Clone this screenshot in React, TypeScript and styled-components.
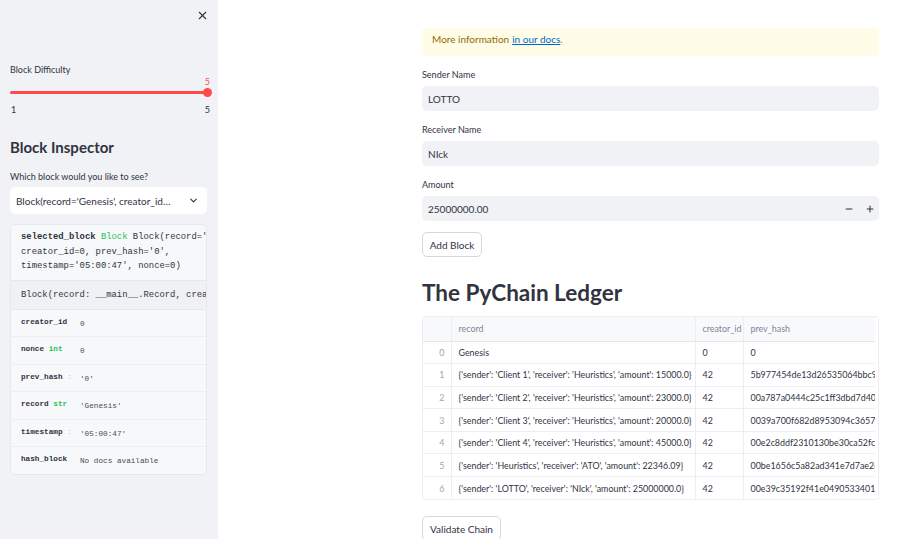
import React from "react";
import styled, { createGlobalStyle } from "styled-components";
import { X, ChevronDown, Minus, Plus } from "lucide-react";

const GlobalStyle = createGlobalStyle`
  html, body {
    margin: 0;
    padding: 0;
    height: 100%;
    overflow: hidden;
  }
  body {
    font-family: Lato, "Noto Sans", sans-serif;
    color: #31333f;
    background: #ffffff;
  }
`;

const mono = `"Liberation Mono", "DejaVu Sans Mono", monospace`;

const Page = styled.div`
  display: flex;
  width: 903px;
  height: 539px;
  overflow: hidden;
`;

const Sidebar = styled.aside`
  width: 218px;
  flex-shrink: 0;
  background: #f0f2f6;
  padding: 0 11px 0 10px;
  box-sizing: border-box;
  display: flex;
  flex-direction: column;
`;

const CloseRow = styled.div`
  display: flex;
  justify-content: flex-end;
  padding-top: 9px;
  margin-right: -2px;
  height: 64px;
  box-sizing: border-box;
  color: #31333f;
`;

const Label = styled.div`
  font-size: 9px;
  line-height: 12px;
  color: #31333f;
`;

const SliderWrap = styled.div`
  position: relative;
  height: 40px;
`;

const Track = styled.div`
  position: absolute;
  left: 0;
  right: 0;
  top: 15px;
  height: 3px;
  border-radius: 2px;
  background: #ff4b4b;
`;

const Thumb = styled.div`
  position: absolute;
  right: -5px;
  top: 12px;
  width: 9px;
  height: 9px;
  border-radius: 50%;
  background: #ff4b4b;
`;

const ThumbValue = styled.div`
  position: absolute;
  right: -3px;
  top: 0;
  font-size: 9px;
  color: #ff4b4b;
`;

const TickRow = styled.div`
  position: absolute;
  left: 0;
  right: -3px;
  top: 28px;
  display: flex;
  justify-content: space-between;
  font-size: 9px;
  padding-left: 1px;
`;

const SideHeading = styled.h2`
  margin: 21px 0 14px;
  font-size: 15px;
  font-weight: 700;
  line-height: 20px;
  color: #31333f;
`;

const Select = styled.div`
  margin-top: 4px;
  height: 27px;
  background: #ffffff;
  border-radius: 5px;
  display: flex;
  align-items: center;
  justify-content: space-between;
  padding: 0 8px 0 6px;
  font-size: 10px;
  color: #31333f;
`;

const DocBox = styled.div`
  margin-top: 10px;
  height: 249px;
  border: 1px solid #e6e8ee;
  border-radius: 5px;
  background: #f7f8fa;
  overflow: hidden;
  display: flex;
  flex-direction: column;
`;

const CodeHead = styled.div`
  padding: 5px 10px 6px;
  font-family: ${mono};
  font-size: 8.9px;
  line-height: 14.5px;
  white-space: pre;
  border-bottom: 1px solid #e6e8ee;
  background: #f7f8fa;
`;

const Bold = styled.span`
  font-weight: 700;
`;

const TypeTag = styled.span<{ $faint?: boolean }>`
  color: #21c354;
  opacity: ${(p) => (p.$faint ? 0.4 : 1)};
`;

const Signature = styled.div`
  padding: 0 10px;
  height: 29px;
  display: flex;
  align-items: center;
  font-family: ${mono};
  font-size: 8.9px;
  white-space: pre;
  background: #eff1f5;
  border-bottom: 1px solid #e6e8ee;
`;

const Field = styled.div`
  display: flex;
  align-items: center;
  height: 27px;
  padding: 0 10px;
  border-bottom: 1px solid #eceef2;
  font-family: ${mono};
  font-size: 7.7px;
  &:last-child {
    border-bottom: none;
  }
`;

const FieldName = styled.div`
  width: 59px;
  flex-shrink: 0;
  font-weight: 700;
  white-space: pre;
  margin-top: -3px;
`;

const FieldValue = styled.div`
  color: #4a4c57;
  margin-top: 1px;
`;

const Main = styled.main`
  flex: 1;
  padding: 28px 0 0 204px;
  box-sizing: border-box;
  overflow: hidden;
`;

const Column = styled.div`
  width: 457px;
  display: flex;
  flex-direction: column;
`;

const Info = styled.div`
  height: 28px;
  box-sizing: border-box;
  background: #fffce7;
  border-radius: 4px;
  color: #926c05;
  font-size: 10px;
  line-height: 12px;
  display: flex;
  align-items: flex-start;
  padding: 5px 0 0 10px;
`;

const DocLink = styled.a`
  color: #0068c9;
  text-decoration: underline;
  margin-left: 3px;
`;

const FieldLabel = styled.div`
  font-size: 9px;
  line-height: 12px;
  margin-top: 13px;
  margin-bottom: 5px;
`;

const Input = styled.div`
  height: 25px;
  background: #f0f2f6;
  border-radius: 5px;
  display: flex;
  align-items: center;
  padding: 0 6px;
  font-size: 10px;
`;

const Stepper = styled.div`
  margin-left: auto;
  display: flex;
  gap: 11px;
  margin-right: -2px;
  color: #31333f;
`;

const ButtonRow = styled.div<{ $top: number }>`
  margin-top: ${(p) => p.$top}px;
`;

const Button = styled.button<{ $width: number }>`
  width: ${(p) => p.$width}px;
  height: 25px;
  background: #ffffff;
  border: 1px solid #d6d8de;
  border-radius: 5px;
  font-family: Lato, "Noto Sans", sans-serif;
  font-size: 10px;
  color: #31333f;
  padding: 0;
  cursor: pointer;
`;

const Ledger = styled.h1`
  margin: 22px 0 9px;
  font-size: 22.5px;
  line-height: 28px;
  font-weight: 700;
  color: #31333f;
`;

const TableBox = styled.div`
  width: 457px;
  height: 184px;
  border: 1px solid #eceef2;
  border-radius: 4px;
  overflow: hidden;
  box-sizing: border-box;
`;

const Table = styled.table`
  border-collapse: collapse;
  font-size: 8.9px;
  table-layout: fixed;
  width: 452px;
`;

const Th = styled.th<{ $w: number }>`
  box-sizing: border-box;
  width: ${(p) => p.$w}px;
  height: 24px;
  background: #f8f9fb;
  font-weight: 400;
  color: #808495;
  text-align: left;
  padding: 0 7px;
  border-right: 1px solid #eceef2;
  border-bottom: 1px solid #e4e6ea;
  white-space: nowrap;
  overflow: hidden;
  &:last-child {
    border-right: none;
  }
`;

const Td = styled.td<{ $index?: boolean }>`
  box-sizing: border-box;
  height: 22.6px;
  padding: 0 ${(p) => (p.$index ? "6px" : "7px")};
  text-align: ${(p) => (p.$index ? "right" : "left")};
  color: ${(p) => (p.$index ? "#a3a5ae" : "#31333f")};
  border-right: 1px solid #eceef2;
  border-bottom: 1px solid #eceef2;
  white-space: nowrap;
  overflow: hidden;
  &:last-child {
    border-right: none;
    text-overflow: clip;
  }
`;

const Tr = styled.tr`
  &:last-child td {
    border-bottom: none;
  }
`;

const rows = [
  ["Genesis", "0", "0"],
  [
    "{'sender': 'Client 1', 'receiver': 'Heuristics', 'amount': 15000.0}",
    "42",
    "5b977454de13d26535064bbc9f6e2",
  ],
  [
    "{'sender': 'Client 2', 'receiver': 'Heuristics', 'amount': 23000.0}",
    "42",
    "00a787a0444c25c1ff3dbd7d40918",
  ],
  [
    "{'sender': 'Client 3', 'receiver': 'Heuristics', 'amount': 20000.0}",
    "42",
    "0039a700f682d8953094c365777a1",
  ],
  [
    "{'sender': 'Client 4', 'receiver': 'Heuristics', 'amount': 45000.0}",
    "42",
    "00e2c8ddf2310130be30ca52fcb823",
  ],
  [
    "{'sender': 'Heuristics', 'receiver': 'ATO', 'amount': 22346.09}",
    "42",
    "00be1656c5a82ad341e7d7ae26637",
  ],
  [
    "{'sender': 'LOTTO', 'receiver': 'NIck', 'amount': 25000000.0}",
    "42",
    "00e39c35192f41e04905334013c5e",
  ],
];

const fields: [string, React.ReactNode, string][] = [
  ["creator_id", null, "0"],
  ["nonce ", <TypeTag key="t">int</TypeTag>, "0"],
  ["prev_hash ", <TypeTag key="t" $faint>:</TypeTag>, "'0'"],
  ["record ", <TypeTag key="t">str</TypeTag>, "'Genesis'"],
  ["timestamp ", <TypeTag key="t" $faint>:</TypeTag>, "'05:00:47'"],
  ["hash_block", null, "No docs available"],
];

export default function App() {
  return (
    <Page>
      <GlobalStyle />
      <Sidebar>
        <CloseRow>
          <X size={13} strokeWidth={2} />
        </CloseRow>
        <Label>Block Difficulty</Label>
        <SliderWrap>
          <ThumbValue>5</ThumbValue>
          <Track />
          <Thumb />
          <TickRow>
            <span>1</span>
            <span>5</span>
          </TickRow>
        </SliderWrap>
        <SideHeading>Block Inspector</SideHeading>
        <Label>Which block would you like to see?</Label>
        <Select>
          <span>Block(record='Genesis', creator_id…</span>
          <ChevronDown size={11} strokeWidth={2.5} />
        </Select>
        <DocBox>
          <CodeHead>
            <Bold>selected_block</Bold> <TypeTag>Block</TypeTag>{" "}
            {"Block(record='Genesis',\ncreator_id=0, prev_hash='0',\ntimestamp='05:00:47', nonce=0)"}
          </CodeHead>
          <Signature>Block(record: __main__.Record, creator_id: int)</Signature>
          {fields.map(([name, tag, value]) => (
            <Field key={name}>
              <FieldName>
                {name}
                {tag}
              </FieldName>
              <FieldValue>{value}</FieldValue>
            </Field>
          ))}
        </DocBox>
      </Sidebar>
      <Main>
        <Column>
          <Info>
            More information<DocLink href="#">in our docs</DocLink>.
          </Info>
          <FieldLabel>Sender Name</FieldLabel>
          <Input>LOTTO</Input>
          <FieldLabel>Receiver Name</FieldLabel>
          <Input>NIck</Input>
          <FieldLabel>Amount</FieldLabel>
          <Input>
            25000000.00
            <Stepper>
              <Minus size={10} strokeWidth={2.5} />
              <Plus size={10} strokeWidth={2.5} />
            </Stepper>
          </Input>
          <ButtonRow $top={11}>
            <Button $width={60}>Add Block</Button>
          </ButtonRow>
          <Ledger>The PyChain Ledger</Ledger>
          <TableBox>
            <Table>
              <thead>
                <tr>
                  <Th $w={28}></Th>
                  <Th $w={244}>record</Th>
                  <Th $w={48}>creator_id</Th>
                  <Th $w={132}>prev_hash</Th>
                </tr>
              </thead>
              <tbody>
                {rows.map((r, i) => (
                  <Tr key={i}>
                    <Td $index>{i}</Td>
                    <Td>{r[0]}</Td>
                    <Td>{r[1]}</Td>
                    <Td>{r[2]}</Td>
                  </Tr>
                ))}
              </tbody>
            </Table>
          </TableBox>
          <ButtonRow $top={16}>
            <Button $width={79}>Validate Chain</Button>
          </ButtonRow>
        </Column>
      </Main>
    </Page>
  );
}
